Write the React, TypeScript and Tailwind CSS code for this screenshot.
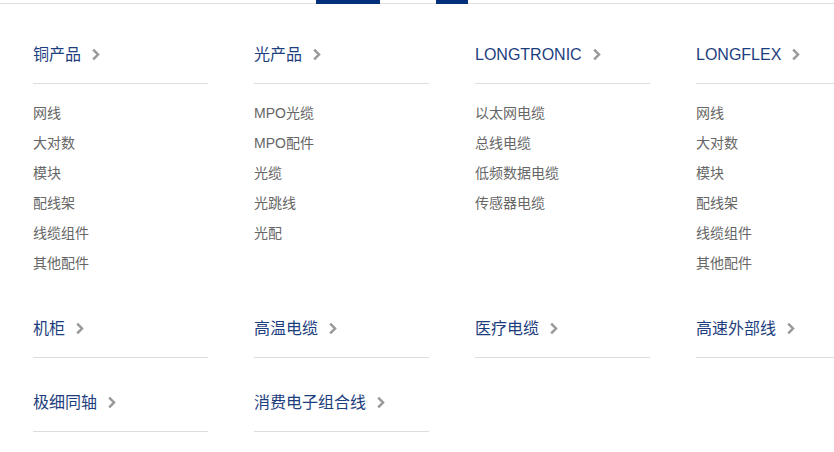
const groups: { title: string; items: string[] }[][] = [
  [
    { title: '铜产品', items: ['网线', '大对数', '模块', '配线架', '线缆组件', '其他配件'] },
    { title: '光产品', items: ['MPO光缆', 'MPO配件', '光缆', '光跳线', '光配'] },
    { title: 'LONGTRONIC', items: ['以太网电缆', '总线电缆', '低频数据电缆', '传感器电缆'] },
    { title: 'LONGFLEX', items: ['网线', '大对数', '模块', '配线架', '线缆组件', '其他配件'] },
  ],
  [
    { title: '机柜', items: [] },
    { title: '高温电缆', items: [] },
    { title: '医疗电缆', items: [] },
    { title: '高速外部线', items: [] },
  ],
  [
    { title: '极细同轴', items: [] },
    { title: '消费电子组合线', items: [] },
  ],
];

function Chevron() {
  return (
    <svg width="10" height="13" viewBox="0 0 10 13" className="ml-[10px] shrink-0">
      <polyline points="2.2,1.6 7,6.5 2.2,11.4" fill="none" stroke="#999" strokeWidth="2.5" />
    </svg>
  );
}

export default function App() {
  return (
    <div
      className="w-[834px] h-[452px] overflow-hidden bg-white"
      style={{ fontFamily: '"Liberation Sans", "Noto Sans CJK SC", sans-serif' }}
    >
      <div className="relative h-[4px] border-b border-[#dddddd]">
        <div className="absolute left-[316px] top-0 w-[64px] h-[4px] bg-[#012f7b]" />
        <div className="absolute left-[436px] top-0 w-[32px] h-[4px] bg-[#012f7b]" />
      </div>
      <div className="pl-[33px] pt-[34px]">
        {groups.map((row, i) => (
          <div key={i} className="flex gap-[46px] w-[1000px]">
            {row.map((g) => (
              <div key={g.title} className="w-[175px] shrink-0 mb-[28px]">
                <div className="flex items-center h-[31px] pt-[2px] text-[16px] text-[#1d3e7e] mb-[14px]">
                  {g.title}
                  <Chevron />
                </div>
                <div className="border-t border-[#dddddd]" />
                {g.items.length > 0 && (
                  <ul className="pt-[14px] pb-[6px]">
                    {g.items.map((it) => (
                      <li key={it} className="h-[30px] leading-[30px] text-[14px] text-[#666666]">
                        {it}
                      </li>
                    ))}
                  </ul>
                )}
              </div>
            ))}
          </div>
        ))}
      </div>
    </div>
  );
}
